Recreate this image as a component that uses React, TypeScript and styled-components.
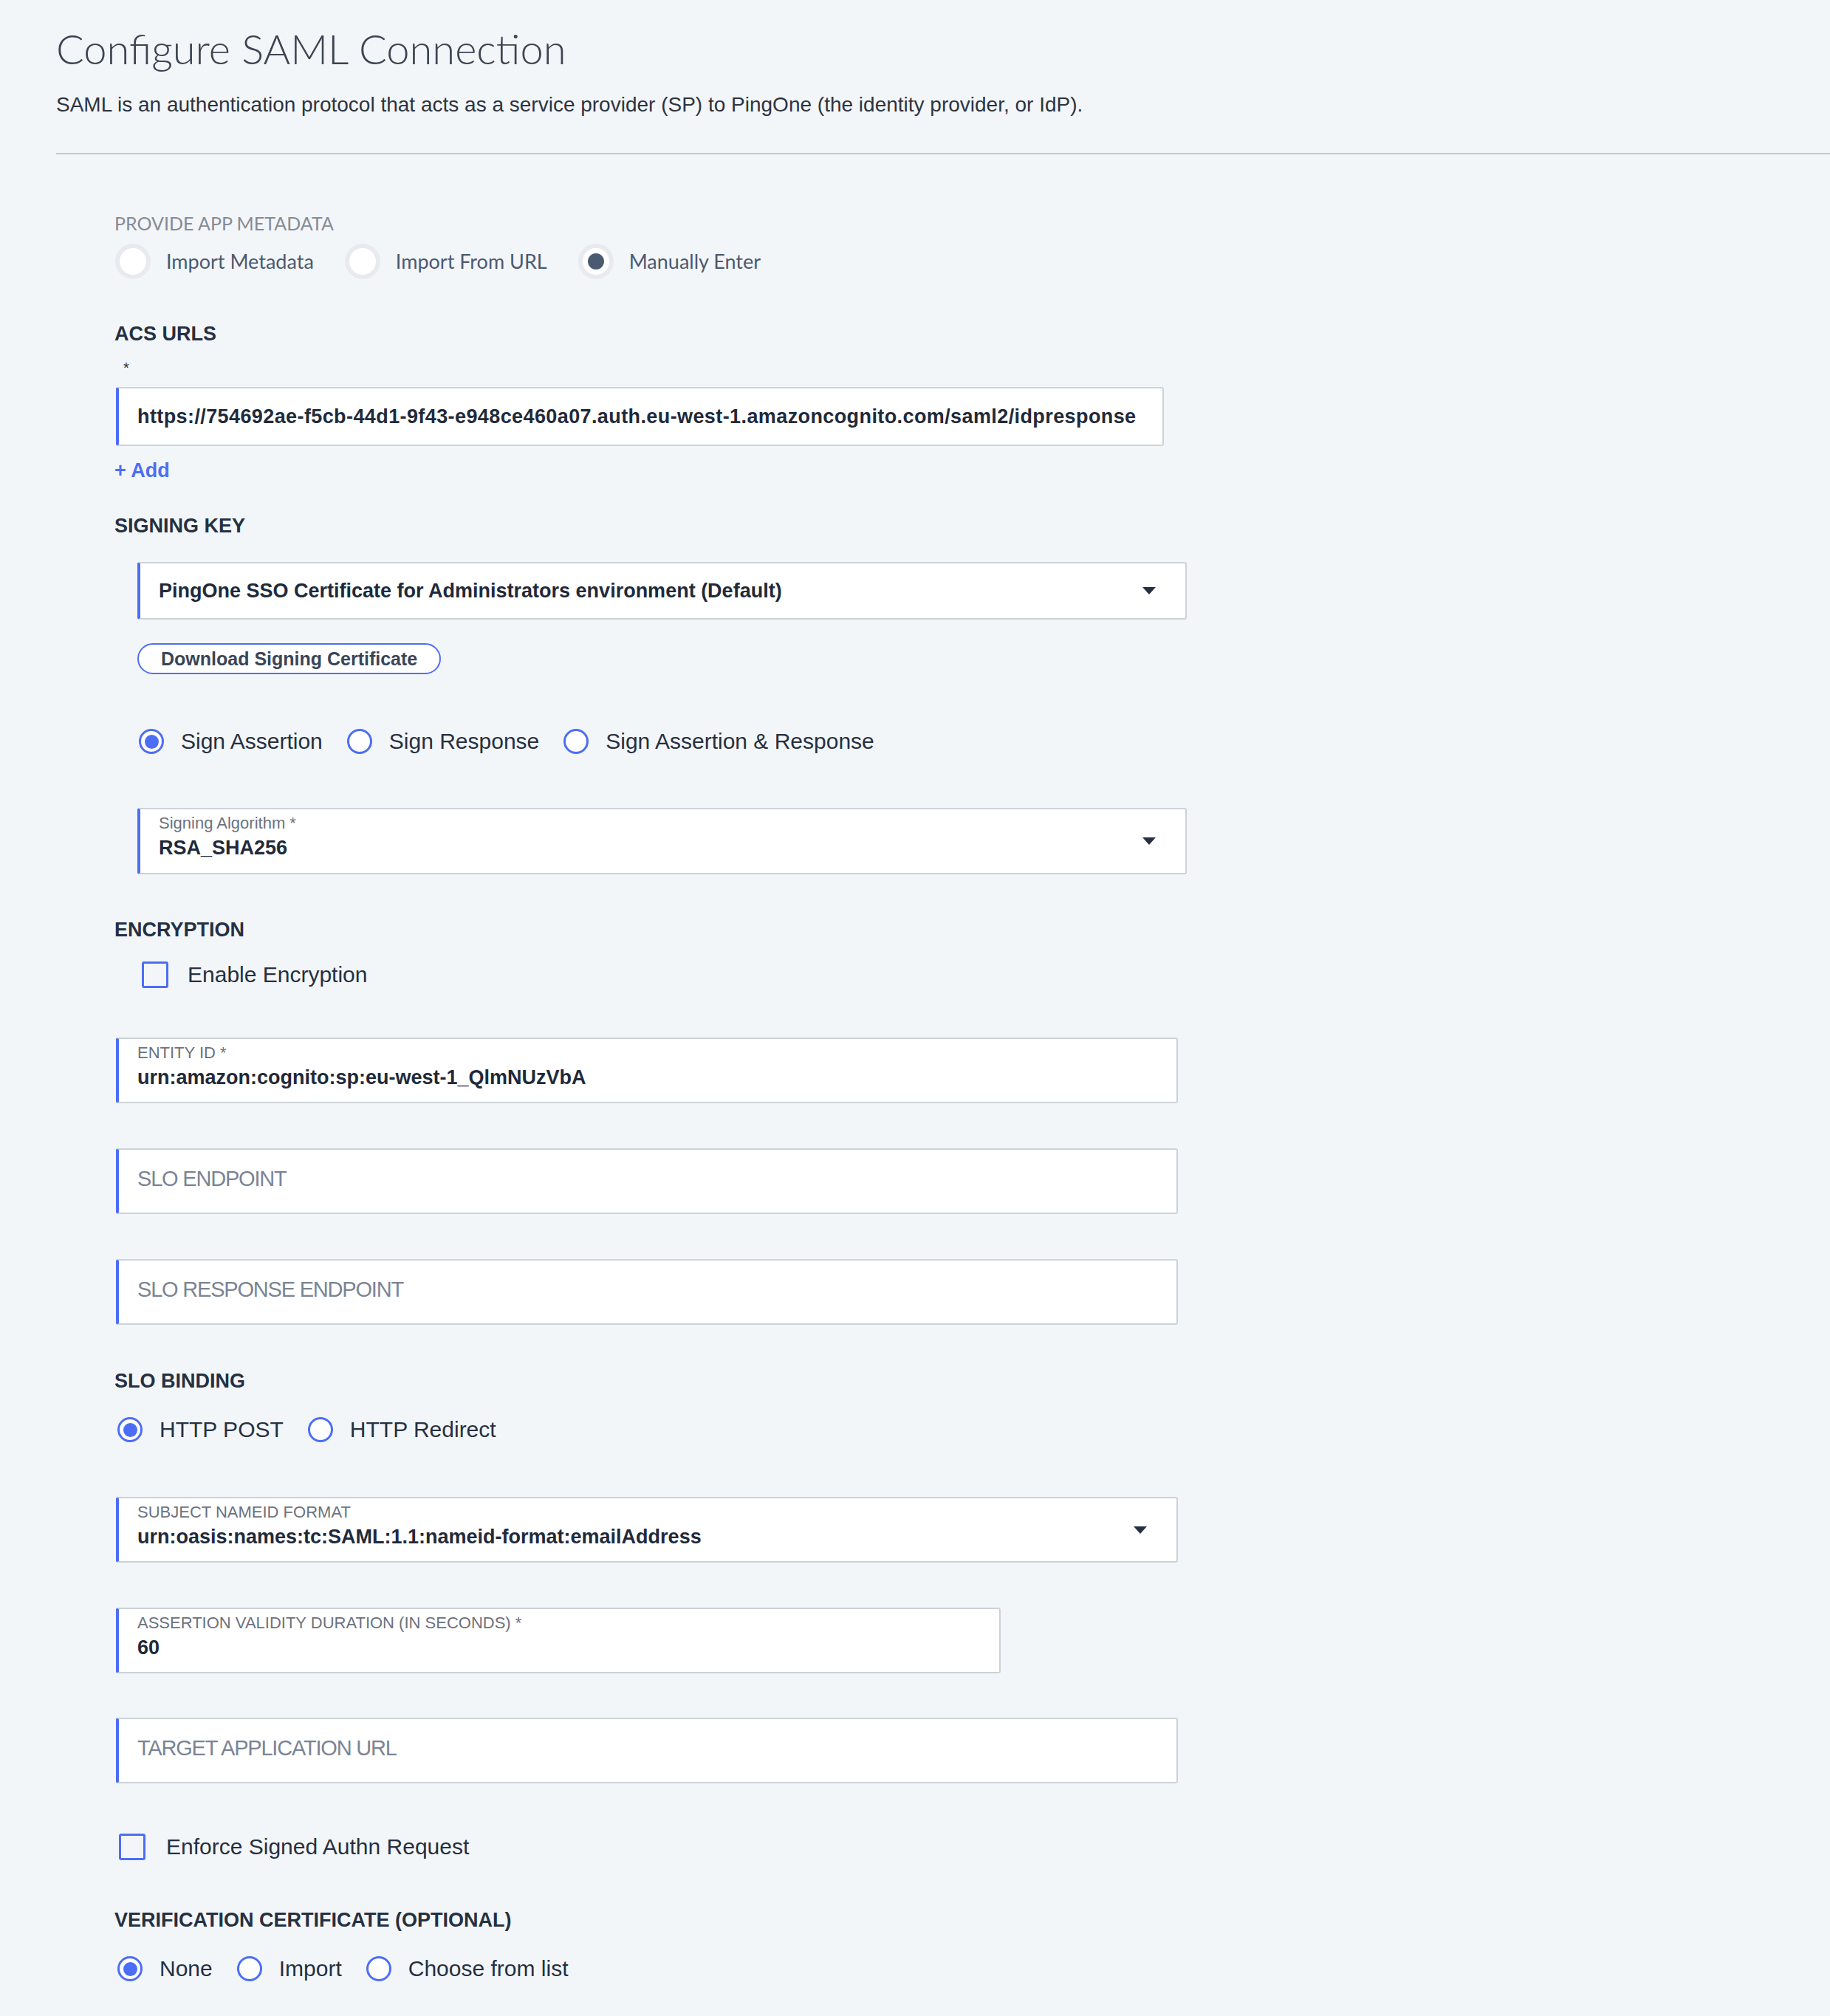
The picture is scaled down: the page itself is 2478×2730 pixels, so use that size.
import React from 'react'
import styled, { createGlobalStyle } from 'styled-components'

const GlobalStyle = createGlobalStyle`
  html, body {
    margin: 0;
    padding: 0;
    background: #f3f6f9;
  }
  body {
    font-family: "Liberation Sans", Arial, sans-serif;
    color: #253041;
  }
`

const BLUE = '#4c6ef5'

const Page = styled.div`
  min-height: 2730px;
  padding: 34px 0 0 76px;
  box-sizing: border-box;
`

const Title = styled.h1`
  margin: 0;
  font-family: Lato, "Liberation Sans", sans-serif;
  font-weight: 300;
  font-size: 56px;
  line-height: 64px;
  color: #3d4451;
`

const Subtitle = styled.p`
  margin: 26px 0 0;
  font-size: 28px;
  line-height: 36px;
  color: #2d3440;
`

const Divider = styled.hr`
  margin: 47px 0 0;
  border: 0;
  height: 2px;
  background: #c3c8d0;
`

const Form = styled.div`
  padding-left: 79px;
  display: flex;
  flex-direction: column;
  align-items: flex-start;
`

const Block = styled.div<{ $mt: number; $ml?: number }>`
  margin-top: ${(p) => p.$mt}px;
  margin-left: ${(p) => p.$ml ?? 0}px;
`

const MetaLabel = styled.div`
  font-family: Lato, "Liberation Sans", sans-serif;
  font-size: 25px;
  line-height: 30px;
  color: #858b96;
`

const SectionTitle = styled.div`
  font-size: 27px;
  line-height: 32px;
  font-weight: 700;
  color: #253041;
`

const Asterisk = styled.div`
  font-size: 20px;
  line-height: 24px;
  padding-left: 12px;
  color: #253041;
`

const RadioRow = styled.div<{ $gap: number }>`
  display: flex;
  align-items: center;
  gap: ${(p) => p.$gap}px;
`

const Option = styled.label<{ $gap: number }>`
  display: flex;
  align-items: center;
  gap: ${(p) => p.$gap}px;
`

const MetaCircle = styled.span<{ $on?: boolean }>`
  width: 48px;
  height: 48px;
  box-sizing: border-box;
  border-radius: 50%;
  border: 6px solid #e8eaee;
  background: #fff;
  display: flex;
  align-items: center;
  justify-content: center;
  &::after {
    content: '';
    display: ${(p) => (p.$on ? 'block' : 'none')};
    width: 22px;
    height: 22px;
    border-radius: 50%;
    background: #4a5a70;
  }
`

const MetaText = styled.span`
  font-family: Lato, "Liberation Sans", sans-serif;
  font-size: 27px;
  line-height: 34px;
  color: #4a5a70;
`

const Circle = styled.span<{ $on?: boolean }>`
  width: 34px;
  height: 34px;
  box-sizing: border-box;
  border-radius: 50%;
  border: 3px solid ${BLUE};
  background: #fff;
  display: flex;
  align-items: center;
  justify-content: center;
  &::after {
    content: '';
    display: ${(p) => (p.$on ? 'block' : 'none')};
    width: 19px;
    height: 19px;
    border-radius: 50%;
    background: ${BLUE};
  }
`

const OptionText = styled.span`
  font-size: 30px;
  line-height: 34px;
  color: #253041;
`

const Box = styled.span`
  width: 36px;
  height: 36px;
  box-sizing: border-box;
  border: 3px solid ${BLUE};
  border-radius: 3px;
  background: transparent;
`

const Field = styled.div<{ $w: number; $h: number; $select?: boolean }>`
  position: relative;
  width: ${(p) => p.$w}px;
  height: ${(p) => p.$h}px;
  box-sizing: border-box;
  background: #fff;
  border: 2px solid #cdd2d8;
  border-left: 4px solid ${BLUE};
  border-radius: 3px;
  padding: 0 ${(p) => (p.$select ? 80 : 20)}px 0 25px;
  display: flex;
  flex-direction: column;
  justify-content: center;
`

const StackField = styled(Field)`
  justify-content: flex-start;
  padding-top: 7px;
`

const Value = styled.div<{ $ls?: number }>`
  font-size: 27px;
  line-height: 34px;
  font-weight: 700;
  color: #1f2a3a;
  white-space: nowrap;
  letter-spacing: ${(p) => p.$ls ?? 0}px;
`

const FloatLabel = styled.div`
  font-size: 22px;
  line-height: 24px;
  color: #6b7280;
`

const StackValue = styled(Value)`
  margin-top: 4px;
`

const Placeholder = styled.div`
  margin-top: -8px;
  font-size: 29px;
  line-height: 34px;
  color: #7b8494;
  letter-spacing: -1.2px;
`

const Caret = styled.svg`
  position: absolute;
  right: 40px;
  top: 50%;
  margin-top: -5px;
`

const AddLink = styled.a`
  font-size: 27px;
  line-height: 30px;
  font-weight: 700;
  color: ${BLUE};
  text-decoration: none;
`

const PillButton = styled.button`
  height: 42px;
  box-sizing: border-box;
  padding: 0 30px;
  border: 2px solid ${BLUE};
  border-radius: 21px;
  background: #fff;
  font-family: "Liberation Sans", Arial, sans-serif;
  font-size: 25px;
  font-weight: 700;
  color: #3a4556;
`

const CaretIcon = () => (
  <Caret width="18" height="10" viewBox="0 0 18 10">
    <path d="M0 0 H18 L9 10 Z" fill="#253041" />
  </Caret>
)

type Opt = { label: string; on?: boolean }

const BlueRadios = ({ items, ml, mt }: { items: Opt[]; ml: number; mt: number }) => (
  <Block $mt={mt} $ml={ml}>
    <RadioRow $gap={33}>
      {items.map((o) => (
        <Option key={o.label} $gap={23}>
          <Circle $on={o.on} />
          <OptionText>{o.label}</OptionText>
        </Option>
      ))}
    </RadioRow>
  </Block>
)

const Check = ({ label, ml, mt, gap }: { label: string; ml: number; mt: number; gap: number }) => (
  <Block $mt={mt} $ml={ml}>
    <Option $gap={gap}>
      <Box />
      <OptionText>{label}</OptionText>
    </Option>
  </Block>
)

export default function App() {
  return (
    <>
      <GlobalStyle />
      <Page>
        <Title>Configure SAML Connection</Title>
        <Subtitle>
          SAML is an authentication protocol that acts as a service provider (SP) to PingOne (the identity provider, or
          IdP).
        </Subtitle>
        <Divider />
        <Form>
          <Block $mt={78}>
            <MetaLabel>PROVIDE APP METADATA</MetaLabel>
          </Block>
          <Block $mt={13} $ml={1}>
            <RadioRow $gap={42}>
              <Option $gap={21}>
                <MetaCircle />
                <MetaText>Import Metadata</MetaText>
              </Option>
              <Option $gap={21}>
                <MetaCircle />
                <MetaText>Import From URL</MetaText>
              </Option>
              <Option $gap={21}>
                <MetaCircle $on />
                <MetaText>Manually Enter</MetaText>
              </Option>
            </RadioRow>
          </Block>

          <Block $mt={58}>
            <SectionTitle>ACS URLS</SectionTitle>
          </Block>
          <Block $mt={18}>
            <Asterisk>*</Asterisk>
          </Block>
          <Block $mt={14} $ml={2}>
            <Field $w={1419} $h={80}>
              <Value $ls={0.4}>
                https://754692ae-f5cb-44d1-9f43-e948ce460a07.auth.eu-west-1.amazoncognito.com/saml2/idpresponse
              </Value>
            </Field>
          </Block>
          <Block $mt={18}>
            <AddLink href="#">+ Add</AddLink>
          </Block>

          <Block $mt={44}>
            <SectionTitle>SIGNING KEY</SectionTitle>
          </Block>
          <Block $mt={33} $ml={31}>
            <Field $w={1421} $h={78} $select>
              <Value>PingOne SSO Certificate for Administrators environment (Default)</Value>
              <CaretIcon />
            </Field>
          </Block>
          <Block $mt={32} $ml={31}>
            <PillButton>Download Signing Certificate</PillButton>
          </Block>
          <BlueRadios
            mt={74}
            ml={33}
            items={[{ label: 'Sign Assertion', on: true }, { label: 'Sign Response' }, { label: 'Sign Assertion & Response' }]}
          />
          <Block $mt={73} $ml={31}>
            <StackField $w={1421} $h={90} $select>
              <FloatLabel>Signing Algorithm *</FloatLabel>
              <StackValue>RSA_SHA256</StackValue>
              <CaretIcon />
            </StackField>
          </Block>

          <Block $mt={59}>
            <SectionTitle>ENCRYPTION</SectionTitle>
          </Block>
          <Check mt={27} ml={37} gap={26} label="Enable Encryption" />

          <Block $mt={67} $ml={2}>
            <StackField $w={1438} $h={89}>
              <FloatLabel>ENTITY ID *</FloatLabel>
              <StackValue>urn:amazon:cognito:sp:eu-west-1_QlmNUzVbA</StackValue>
            </StackField>
          </Block>
          <Block $mt={61} $ml={2}>
            <Field $w={1438} $h={89}>
              <Placeholder>SLO ENDPOINT</Placeholder>
            </Field>
          </Block>
          <Block $mt={61} $ml={2}>
            <Field $w={1438} $h={89}>
              <Placeholder>SLO RESPONSE ENDPOINT</Placeholder>
            </Field>
          </Block>

          <Block $mt={60}>
            <SectionTitle>SLO BINDING</SectionTitle>
          </Block>
          <BlueRadios mt={33} ml={4} items={[{ label: 'HTTP POST', on: true }, { label: 'HTTP Redirect' }]} />

          <Block $mt={74} $ml={2}>
            <StackField $w={1438} $h={89} $select>
              <FloatLabel>SUBJECT NAMEID FORMAT</FloatLabel>
              <StackValue>urn:oasis:names:tc:SAML:1.1:nameid-format:emailAddress</StackValue>
              <CaretIcon />
            </StackField>
          </Block>
          <Block $mt={61} $ml={2}>
            <StackField $w={1198} $h={89}>
              <FloatLabel>ASSERTION VALIDITY DURATION (IN SECONDS) *</FloatLabel>
              <StackValue>60</StackValue>
            </StackField>
          </Block>
          <Block $mt={60} $ml={2}>
            <Field $w={1438} $h={89}>
              <Placeholder>TARGET APPLICATION URL</Placeholder>
            </Field>
          </Block>

          <Check mt={68} ml={6} gap={28} label="Enforce Signed Authn Request" />

          <Block $mt={65}>
            <SectionTitle>VERIFICATION CERTIFICATE (OPTIONAL)</SectionTitle>
          </Block>
          <BlueRadios
            mt={33}
            ml={4}
            items={[{ label: 'None', on: true }, { label: 'Import' }, { label: 'Choose from list' }]}
          />
        </Form>
      </Page>
    </>
  )
}
